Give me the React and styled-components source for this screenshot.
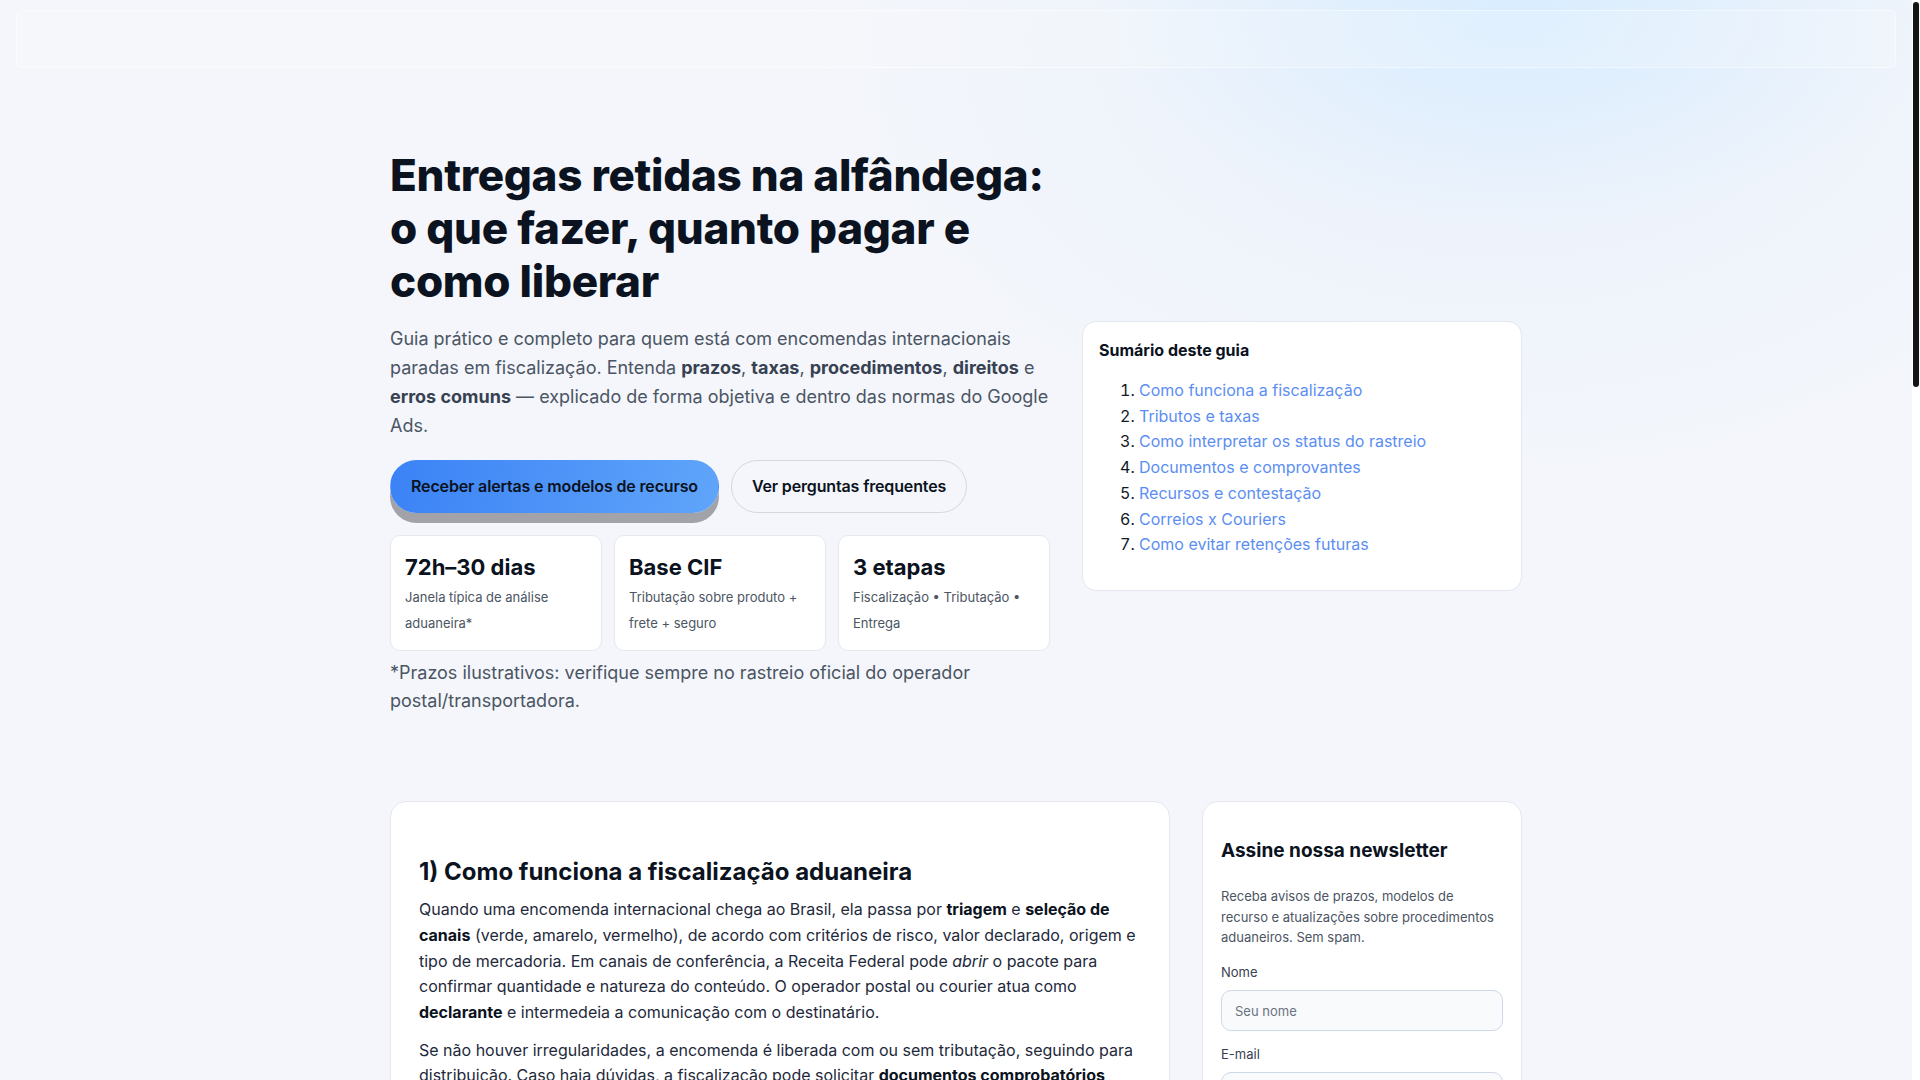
import React from "react";
import styled, { createGlobalStyle } from "styled-components";

const Global = createGlobalStyle`
  html { background: #f4f6fb; }
  body {
    margin: 0;
    font-family: Inter, "Noto Sans", "Liberation Sans", sans-serif;
    color: #0f172a;
    background:
      radial-gradient(420px 220px at 1520px 10px, rgba(214, 236, 255, 0.85), rgba(214, 236, 255, 0) 100%),
      radial-gradient(700px 460px at 1500px 40px, rgba(226, 238, 252, 0.6), rgba(226, 238, 252, 0) 100%),
      #f4f6fb;
    background-repeat: no-repeat;
    -webkit-font-smoothing: antialiased;
  }
  * { box-sizing: border-box; }
`;

const Page = styled.div`
  margin-right: 8px;
`;

const ScrollTrack = styled.div`
  position: fixed;
  top: 0;
  right: 0;
  width: 8px;
  height: 100vh;
  background: #ffffff;
  z-index: 10;
`;

const ScrollThumb = styled.div`
  position: absolute;
  top: 2px;
  left: 1px;
  width: 6px;
  height: 385px;
  border-radius: 4px;
  background: #141414;
`;

const Header = styled.header`
  margin: 10px 16px 0;
  height: 58px;
  border-radius: 6px;
  background: rgba(255, 255, 255, 0.18);
  border: 1px solid rgba(255, 255, 255, 0.45);
`;

const Container = styled.div`
  max-width: 1180px;
  margin: 0 auto;
  padding: 0 24px;
`;

const Hero = styled.section`
  display: grid;
  grid-template-columns: 1.5fr 1fr;
  gap: 32px;
  align-items: start;
  padding-top: 81px;
`;

const HeroCopy = styled.div`
  display: flex;
  flex-direction: column;
`;

const Title = styled.h1`
  margin: 0;
  font-size: 44px;
  line-height: 1.2;
  font-weight: 800;
  letter-spacing: -0.3px;
  color: #0b1220;
`;

const Lead = styled.p`
  margin: 18px 0 0;
  font-size: 18px;
  line-height: 1.6;
  color: #4b5563;
  b { color: #374151; font-weight: 700; }
`;

const Actions = styled.div`
  display: flex;
  gap: 12px;
  margin-top: 19px;
`;

const Button = styled.a`
  display: inline-flex;
  align-items: center;
  height: 53px;
  padding: 0 20px;
  border-radius: 999px;
  font-size: 16px;
  font-weight: 600;
  letter-spacing: -0.15px;
  color: #0b1220;
  text-decoration: none;
  white-space: nowrap;
  border: 1px solid ${(p) => (p.$primary ? "transparent" : "#d4d7de")};
  background: ${(p) =>
    p.$primary ? "linear-gradient(100deg, #3b82f6 0%, #60a5fa 100%)" : "transparent"};
  box-shadow: ${(p) => (p.$primary ? "0 10px 0 #a1a3a9" : "none")};
`;

const Stats = styled.div`
  display: grid;
  grid-template-columns: repeat(3, 1fr);
  gap: 12px;
  margin-top: 22px;
`;

const Stat = styled.div`
  background: #fff;
  border: 1px solid #e6e8ee;
  border-radius: 10px;
  padding: 17px 14px 13px;
`;

const StatValue = styled.div`
  font-size: 22px;
  line-height: 1.3;
  font-weight: 700;
  color: #0b1220;
`;

const StatText = styled.div`
  margin-top: 4px;
  font-size: 13px;
  line-height: 25.7px;
  color: #4b5563;
`;

const Footnote = styled.p`
  margin: 8px 0 0;
  font-size: 18px;
  line-height: 1.6;
  color: #4b5563;
`;

const Summary = styled.aside`
  margin-top: 172px;
  background: #fff;
  border: 1px solid #e4e7ee;
  border-radius: 14px;
  padding: 16px;
`;

const SummaryTitle = styled.h2`
  margin: 0;
  font-size: 16px;
  line-height: 24px;
  font-weight: 700;
  color: #0b1220;
`;

const SummaryList = styled.ol`
  margin: 16px 0;
  padding-left: 40px;
  font-size: 16px;
  line-height: 25.7px;
  color: #111827;
  a { color: #5b8ef2; text-decoration: none; }
`;

const Main = styled.div`
  display: grid;
  grid-template-columns: 1fr 320px;
  gap: 32px;
  align-items: start;
  margin-top: 85px;
  padding-bottom: 80px;
`;

const Article = styled.article`
  background: #fff;
  border: 1px solid #e6e8ee;
  border-radius: 16px;
  padding: 28px 28px 40px;
`;

const Section = styled.section`
  & + & { margin-top: 28px; }
`;

const H2 = styled.h2`
  margin: 26px 0 10px;
  font-size: 24px;
  line-height: 1.3;
  font-weight: 700;
  color: #0b1220;
`;

const P = styled.p`
  margin: 0 0 12.4px;
  font-size: 16px;
  line-height: 1.6;
  color: #1e293b;
  b { font-weight: 700; color: #0b1220; }
`;

const Newsletter = styled.aside`
  background: #fff;
  border: 1px solid #e6e8ee;
  border-radius: 16px;
  padding: 18px 18px 24px;
`;

const NewsTitle = styled.h3`
  margin: 18px 0 22px;
  font-size: 19px;
  line-height: 1.35;
  font-weight: 700;
  color: #0b1220;
`;

const NewsText = styled.p`
  margin: 0 0 14px;
  font-size: 13px;
  line-height: 1.6;
  color: #4b5563;
`;

const Field = styled.label`
  display: flex;
  flex-direction: column;
  gap: 8px;
  font-size: 13px;
  line-height: 20px;
  color: #374151;
  & + & { margin-top: 13px; }
`;

const Input = styled.input`
  height: 41px;
  width: 100%;
  border: 1px solid #cfd8e8;
  border-radius: 10px;
  background: #f8fafc;
  padding: 0 13px;
  font-family: inherit;
  font-size: 13px;
  color: #111827;
  &::placeholder { color: #6b7280; }
`;

const Submit = styled.button`
  margin-top: 16px;
  width: 100%;
  height: 44px;
  border: 0;
  border-radius: 999px;
  background: linear-gradient(100deg, #3b82f6 0%, #60a5fa 100%);
  font-family: inherit;
  font-size: 14px;
  font-weight: 600;
  color: #0b1220;
`;

const toc = [
  "Como funciona a fiscalização",
  "Tributos e taxas",
  "Como interpretar os status do rastreio",
  "Documentos e comprovantes",
  "Recursos e contestação",
  "Correios x Couriers",
  "Como evitar retenções futuras",
];

export default function App() {
  return (
    <>
      <Global />
      <ScrollTrack aria-hidden="true">
        <ScrollThumb />
      </ScrollTrack>
      <Page>
        <Header />
        <Container>
          <Hero>
            <HeroCopy>
              <Title>Entregas retidas na alfândega: o que fazer, quanto pagar e como liberar</Title>
              <Lead>
                Guia prático e completo para quem está com encomendas internacionais paradas em
                fiscalização. Entenda <b>prazos</b>, <b>taxas</b>, <b>procedimentos</b>, <b>direitos</b> e{" "}
                <b>erros comuns</b> — explicado de forma objetiva e dentro das normas do Google Ads.
              </Lead>
              <Actions>
                <Button $primary href="#newsletter">Receber alertas e modelos de recurso</Button>
                <Button href="#faq">Ver perguntas frequentes</Button>
              </Actions>
              <Stats>
                <Stat>
                  <StatValue>72h–30 dias</StatValue>
                  <StatText>Janela típica de análise aduaneira*</StatText>
                </Stat>
                <Stat>
                  <StatValue>Base CIF</StatValue>
                  <StatText>Tributação sobre produto + frete + seguro</StatText>
                </Stat>
                <Stat>
                  <StatValue>3 etapas</StatValue>
                  <StatText>Fiscalização • Tributação • Entrega</StatText>
                </Stat>
              </Stats>
              <Footnote>
                *Prazos ilustrativos: verifique sempre no rastreio oficial do operador postal/transportadora.
              </Footnote>
            </HeroCopy>
            <Summary>
              <SummaryTitle>Sumário deste guia</SummaryTitle>
              <SummaryList>
                {toc.map((t, i) => (
                  <li key={i}>
                    <a href={`#s${i + 1}`}>{t}</a>
                  </li>
                ))}
              </SummaryList>
            </Summary>
          </Hero>

          <Main>
            <Article>
              <Section id="s1">
                <H2>1) Como funciona a fiscalização aduaneira</H2>
                <P>
                  Quando uma encomenda internacional chega ao Brasil, ela passa por <b>triagem</b> e{" "}
                  <b>seleção de canais</b> (verde, amarelo, vermelho), de acordo com critérios de risco, valor
                  declarado, origem e tipo de mercadoria. Em canais de conferência, a Receita Federal pode{" "}
                  <em>abrir</em> o pacote para confirmar quantidade e natureza do conteúdo. O operador postal ou
                  courier atua como <b>declarante</b> e intermedeia a comunicação com o destinatário.
                </P>
                <P>
                  Se não houver irregularidades, a encomenda é liberada com ou sem tributação, seguindo para
                  distribuição. Caso haja dúvidas, a fiscalização pode solicitar <b>documentos comprobatórios</b>{" "}
                  como fatura comercial, comprovante de pagamento e descrição detalhada do produto.
                </P>
              </Section>
              <Section id="s2">
                <H2>2) Tributos e taxas</H2>
                <P>
                  O cálculo considera o valor aduaneiro (produto + frete + seguro). Sobre essa base incidem o
                  Imposto de Importação e, conforme o estado, o ICMS. Operadores também podem cobrar uma taxa
                  de despacho postal pelo serviço de desembaraço.
                </P>
              </Section>
              <Section id="s3">
                <H2>3) Como interpretar os status do rastreio</H2>
                <P>
                  “Encaminhado para fiscalização”, “Aguardando pagamento” e “Fiscalização concluída” indicam
                  fases diferentes do processo. Acompanhe as datas de cada evento para identificar atrasos fora
                  do padrão.
                </P>
              </Section>
              <Section id="s4">
                <H2>4) Documentos e comprovantes</H2>
                <P>
                  Tenha em mãos a fatura (invoice), o comprovante de pagamento do pedido, prints do anúncio e
                  qualquer comunicação com o vendedor.
                </P>
              </Section>
              <Section id="s5">
                <H2>5) Recursos e contestação</H2>
                <P>
                  Se a tributação parecer incorreta, é possível apresentar recurso dentro do prazo indicado,
                  anexando os documentos que comprovam o valor real da compra.
                </P>
              </Section>
              <Section id="s6">
                <H2>6) Correios x Couriers</H2>
                <P>
                  Nos Correios, o pagamento e o recurso são feitos pelo portal de rastreio. Nos couriers privados,
                  o processo é conduzido pela própria transportadora.
                </P>
              </Section>
              <Section id="s7">
                <H2>7) Como evitar retenções futuras</H2>
                <P>
                  Prefira vendedores que declarem corretamente o conteúdo e o valor, e acompanhe o rastreio com
                  frequência para agir rapidamente.
                </P>
              </Section>
            </Article>

            <Newsletter id="newsletter">
              <NewsTitle>Assine nossa newsletter</NewsTitle>
              <NewsText>
                Receba avisos de prazos, modelos de recurso e atualizações sobre procedimentos aduaneiros. Sem
                spam.
              </NewsText>
              <Field>
                Nome
                <Input placeholder="Seu nome" />
              </Field>
              <Field>
                E-mail
                <Input placeholder="seu@email.com" />
              </Field>
              <Submit type="button">Quero receber</Submit>
            </Newsletter>
          </Main>
        </Container>
      </Page>
    </>
  );
}
